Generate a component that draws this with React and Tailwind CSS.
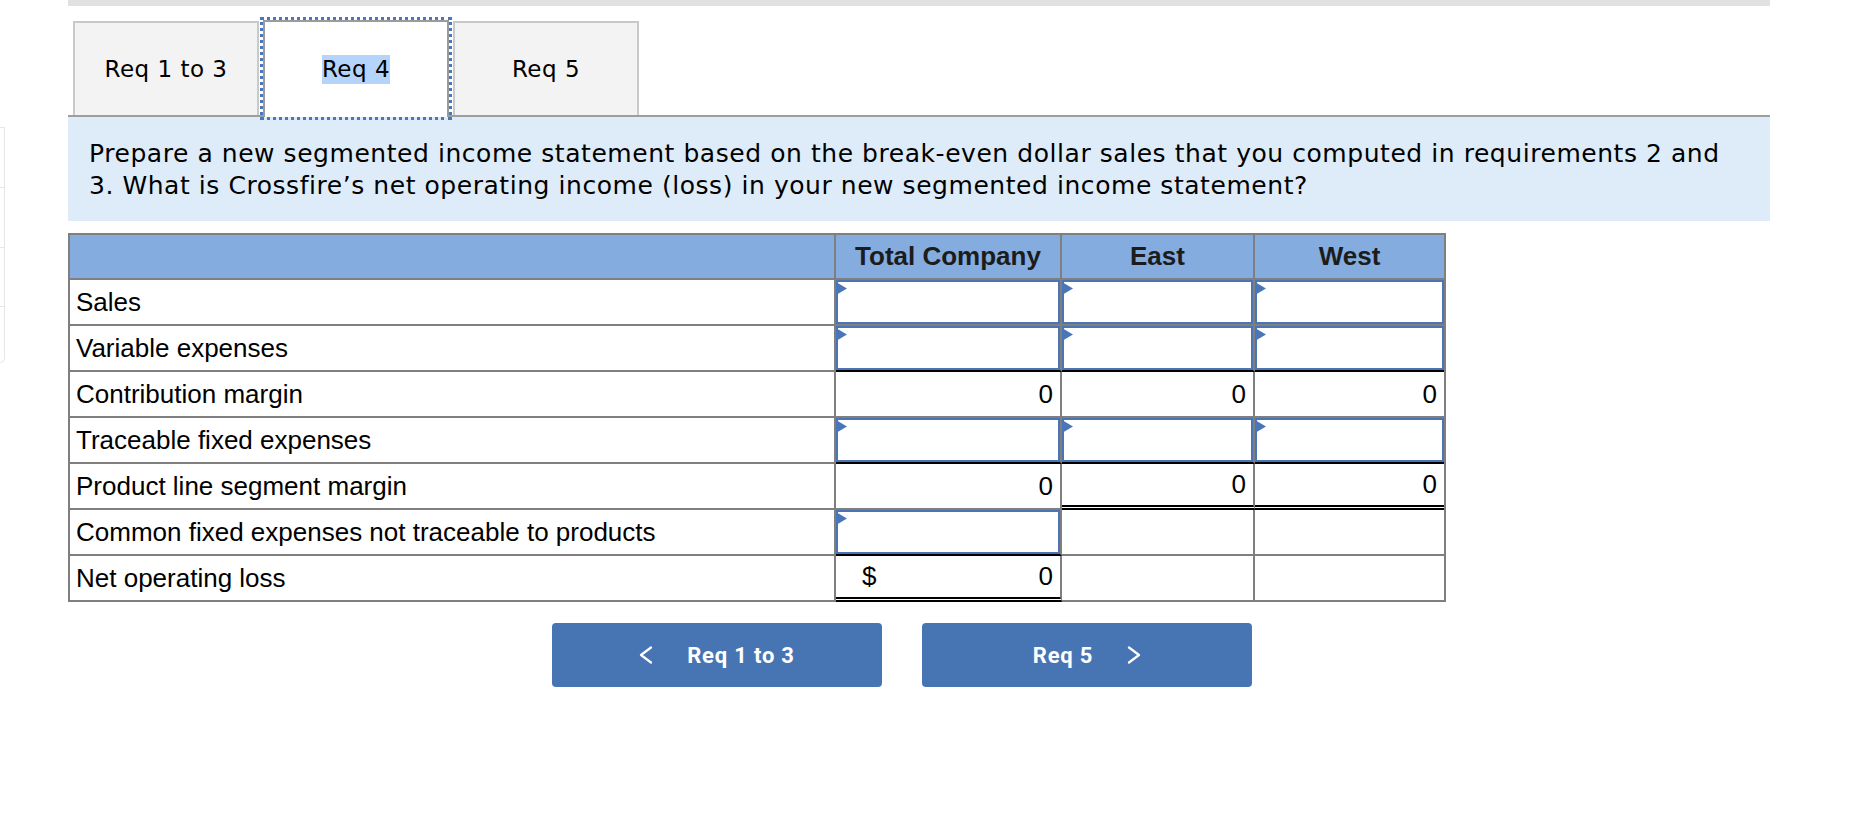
import React from "react";

const rows = [
  { label: "Sales", cells: ["input", "input", "input"] },
  { label: "Variable expenses", cells: ["input", "input", "input"], blackBottom: [true, true, true] },
  { label: "Contribution margin", cells: ["0", "0", "0"] },
  { label: "Traceable fixed expenses", cells: ["input", "input", "input"], blackBottom: [true, true, true] },
  { label: "Product line segment margin", cells: ["0", "0", "0"], doubleBottom: [false, true, true] },
  { label: "Common fixed expenses not traceable to products", cells: ["input", "", ""], blackBottom: [true, false, false] },
  { label: "Net operating loss", cells: ["$0", "", ""], doubleBottom: [true, false, false], last: true },
];

function InputCell() {
  return (
    <div className="relative h-full w-full border-2 border-[#4a74b4] bg-white">
      <svg className="absolute left-[-2px] top-[0px]" width="11" height="13" viewBox="0 0 11 13">
        <polygon points="0,0 11,6.5 0,13" fill="#4876b9" />
      </svg>
    </div>
  );
}

function Cell({ value, black, dbl }) {
  let border = "border-b-2 border-[#7f7f7f]";
  if (black) border = "border-b-2 border-black";
  if (dbl) border = "border-b-[5px] border-double border-black";
  return (
    <div className={`h-[46px] ${border} border-r-2 border-r-[#7f7f7f] last:border-r-0 flex items-center`}>
      {value === "input" ? (
        <InputCell />
      ) : value === "$0" ? (
        <div className="flex w-full items-center justify-between pl-[26px] pr-[7px]">
          <span>$</span>
          <span>0</span>
        </div>
      ) : (
        <div className="w-full pr-[7px] text-right">{value}</div>
      )}
    </div>
  );
}

function Chevron({ dir }) {
  return (
    <svg width="14" height="18" viewBox="0 0 14 18" fill="none" stroke="white" strokeWidth="2.2" strokeLinecap="round" strokeLinejoin="round">
      {dir === "left" ? <polyline points="12,1.5 2,9 12,16.5" /> : <polyline points="2,1.5 12,9 2,16.5" />}
    </svg>
  );
}

export default function App() {
  return (
    <div className="relative flex min-h-screen bg-white">
      <div className="mt-[127px] w-[5px] shrink-0">
        <div className="h-[61px] border-y border-r border-[#e6e6e6]" />
        <div className="h-[60px] border-b border-r border-[#e6e6e6]" />
        <div className="h-[59px] border-b border-r border-[#e6e6e6]" />
        <div className="h-[56px] rounded-br-[6px] border-b border-r border-[#e6e6e6]" />
      </div>

      <div className="ml-[63px] w-[1702px]">
        <div className="h-[6px] bg-[#e1e1e1]" />

        <div className="relative z-10 flex items-end gap-[4px] pl-[5px] pt-[14px] text-[23px] tracking-[0.5px]" style={{ fontFamily: "'DejaVu Sans', Verdana, sans-serif" }}>
          <div className="flex h-[94px] w-[186px] items-center justify-center border-2 border-b-0 border-[#c9c9c9] bg-[#f3f3f3] text-black">
            Req 1 to 3
          </div>
          <div className="mb-[-2px] flex h-[97px] w-[186px] items-center justify-center border-2 border-b-0 border-[#9b9b9b] bg-white text-black outline-[3px] outline-dotted outline-[#4a78c0]">
            <span className="bg-[#b5d4fc] leading-[29px]">Req 4</span>
          </div>
          <div className="flex h-[94px] w-[186px] items-center justify-center border-2 border-b-0 border-[#c9c9c9] bg-[#f3f3f3] text-black">
            Req 5
          </div>
        </div>

        <div
          className="h-[106px] border-t-2 border-[#9e9e9e] bg-[#deecf9] pl-[21px] pt-[21px] text-[25px] leading-[32px] tracking-[0.55px] text-black"
          style={{ fontFamily: "'DejaVu Sans', Verdana, sans-serif" }}
        >
          <span className="whitespace-nowrap">Prepare a new segmented income statement based on the break-even dollar sales that you computed in requirements 2 and</span>
          <br />
          <span className="whitespace-nowrap">3. What is Crossfire’s net operating income (loss) in your new segmented income statement?</span>
        </div>

        <div
          className="mt-[12px] w-[1378px] border-x-2 border-t-2 border-[#7f7f7f] text-[26px] text-black"
          style={{ fontFamily: "'Liberation Sans', Arial, sans-serif" }}
        >
          <div className="grid grid-cols-[766px_226px_193px_189px] bg-[#84acdf] font-bold text-[#1c1c1c]">
            <div className="h-[45px] border-b-2 border-r-2 border-[#7f7f7f]" />
            <div className="flex h-[45px] items-center justify-center border-b-2 border-r-2 border-[#7f7f7f]">Total Company</div>
            <div className="flex h-[45px] items-center justify-center border-b-2 border-r-2 border-[#7f7f7f]">East</div>
            <div className="flex h-[45px] items-center justify-center border-b-2 border-[#7f7f7f]">West</div>
          </div>
          {rows.map((row) => (
            <div key={row.label} className="grid grid-cols-[766px_226px_193px_189px]">
              <div className="flex h-[46px] items-center border-b-2 border-r-2 border-[#7f7f7f] pl-[6px]">{row.label}</div>
              {row.cells.map((c, i) => (
                <Cell
                  key={i}
                  value={c}
                  black={row.blackBottom && row.blackBottom[i]}
                  dbl={row.doubleBottom && row.doubleBottom[i]}
                />
              ))}
            </div>
          ))}
        </div>

        <div className="ml-[484px] mt-[21px] flex gap-[40px]" style={{ fontFamily: "Roboto, sans-serif" }}>
          <button className="flex h-[64px] w-[330px] items-center justify-center gap-[34px] rounded-[4px] bg-[#4775b3] text-[22px] font-bold tracking-[0.8px] text-white">
            <Chevron dir="left" />
            <span>Req 1 to 3</span>
          </button>
          <button className="flex h-[64px] w-[330px] items-center justify-center gap-[34px] rounded-[4px] bg-[#4775b3] text-[22px] font-bold tracking-[0.8px] text-white">
            <span>Req 5</span>
            <Chevron dir="right" />
          </button>
        </div>
      </div>
    </div>
  );
}
